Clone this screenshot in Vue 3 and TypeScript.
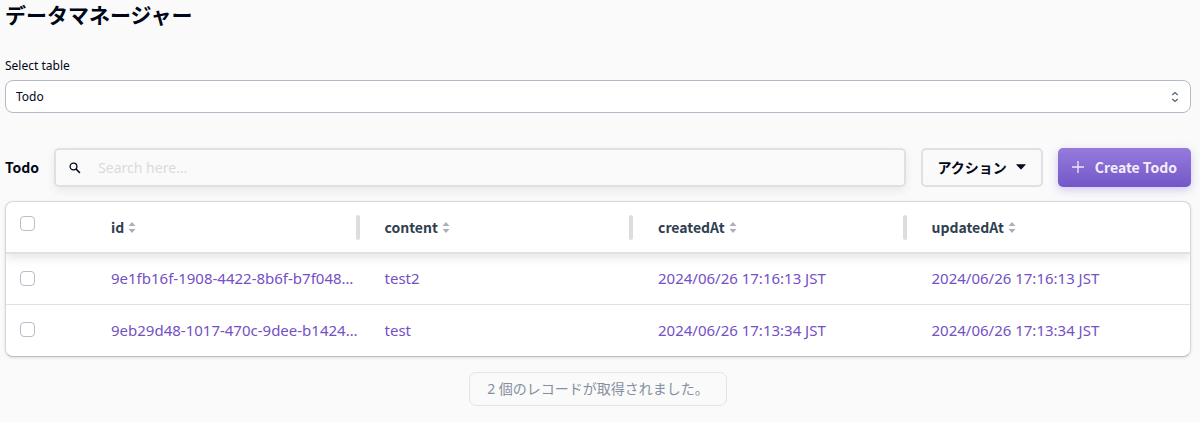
<script setup lang="ts">
import { ref } from 'vue'

interface Todo {
  id: string
  content: string
  createdAt: string
  updatedAt: string
}

const columns: (keyof Todo)[] = ['id', 'content', 'createdAt', 'updatedAt']

const rows: Todo[] = [
  {
    id: '9e1fb16f-1908-4422-8b6f-b7f048…',
    content: 'test2',
    createdAt: '2024/06/26 17:16:13 JST',
    updatedAt: '2024/06/26 17:16:13 JST',
  },
  {
    id: '9eb29d48-1017-470c-9dee-b1424…',
    content: 'test',
    createdAt: '2024/06/26 17:13:34 JST',
    updatedAt: '2024/06/26 17:13:34 JST',
  },
]

const table = ref('Todo')
const search = ref('')
const selected = ref<string[]>([])

function toggleAll(event: Event) {
  const checked = (event.target as HTMLInputElement).checked
  selected.value = checked ? rows.map((row) => row.id) : []
}
</script>

<template>
  <main class="manager">
    <h1 class="title">データマネージャー</h1>

    <label class="select-label" for="table-select">Select table</label>
    <div class="select-box">
      <select id="table-select" v-model="table" class="select">
        <option>Todo</option>
      </select>
      <svg class="select-icon" width="8" height="12" viewBox="0 0 8 12" aria-hidden="true">
        <path d="M1.3 4 4 1.6 6.7 4M1.3 8 4 10.4 6.7 8" fill="none" stroke="#566170" stroke-width="1.3" />
      </svg>
    </div>

    <div class="toolbar">
      <h2 class="name">Todo</h2>
      <label class="search">
        <svg width="12" height="12" viewBox="0 0 12 12" aria-hidden="true">
          <circle cx="4.5" cy="4.5" r="3.4" fill="none" stroke="#000716" stroke-width="1.3" />
          <path d="M7 7l3.9 3.9" stroke="#000716" stroke-width="1.6" />
        </svg>
        <input v-model="search" type="text" placeholder="Search here..." aria-label="Search" />
      </label>
      <button class="button action" type="button">
        アクション
        <svg width="10" height="6" viewBox="0 0 10 6" aria-hidden="true">
          <path d="M.6.3h8.8q.6 0 .2.5L5.6 5.1q-.6.6-1.2 0L.4.8Q0 .3.6.3z" fill="#000716" />
        </svg>
      </button>
      <button class="button create" type="button">
        <svg width="12" height="12" viewBox="0 0 12 12" aria-hidden="true">
          <path d="M6 0v12M0 6h12" stroke="#eee8fc" stroke-width="1.3" />
        </svg>
        Create Todo
      </button>
    </div>

    <div class="panel">
      <table class="table">
        <thead>
          <tr>
            <th class="check" scope="col">
              <input
                type="checkbox"
                aria-label="Select all"
                :checked="selected.length === rows.length"
                @change="toggleAll"
              />
            </th>
            <th v-for="column in columns" :key="column" scope="col">
              <div class="heading">
                <span>{{ column }}</span>
                <svg width="8" height="11" viewBox="0 0 8 11" aria-hidden="true">
                  <path d="M.5 4 4 0 7.5 4zM.5 7 4 11 7.5 7z" fill="#a9b0b9" />
                </svg>
              </div>
            </th>
          </tr>
        </thead>
        <tbody>
          <tr v-for="row in rows" :key="row.id">
            <td class="check">
              <input v-model="selected" type="checkbox" :value="row.id" :aria-label="row.content" />
            </td>
            <td v-for="column in columns" :key="column">{{ row[column] }}</td>
          </tr>
        </tbody>
      </table>
    </div>

    <p class="count">2 個のレコードが取得されました。</p>
  </main>
</template>

<style>
body {
  margin: 0;
  background: #fafafa;
}
</style>

<style scoped>
* {
  box-sizing: border-box;
}

.manager {
  display: flex;
  flex-direction: column;
  padding: 0 9px 16px 5px;
  color: #000716;
  font-family: "Noto Sans", "Noto Sans CJK JP", sans-serif;
  font-size: 15px;
}

input,
select,
button {
  font-family: inherit;
  color: inherit;
}

.title {
  margin: 0;
  font-size: 21px;
  line-height: 30px;
  font-weight: 700;
}

.select-label {
  margin-top: 26px;
  font-size: 12px;
  line-height: 20px;
}

.select-box {
  display: grid;
  align-items: center;
  margin-top: 4px;
}

.select {
  grid-area: 1 / 1;
  width: 100%;
  height: 33px;
  padding: 0 10px;
  appearance: none;
  border: 1px solid #b3bbc8;
  border-radius: 8px;
  background: #fff;
  font-size: 12px;
}

.select-icon {
  grid-area: 1 / 1;
  justify-self: end;
  margin-right: 12px;
  pointer-events: none;
}

.toolbar {
  display: flex;
  align-items: center;
  gap: 15px;
  margin-top: 35px;
}

.name {
  margin: 0;
  padding-bottom: 2px;
  font-family: "Noto Sans CJK JP", sans-serif;
  font-size: 14px;
  font-weight: 700;
}

.search {
  flex: 1;
  display: flex;
  align-items: center;
  gap: 17px;
  height: 39px;
  padding: 0 13px;
  border: 2px solid #dfe0e2;
  border-radius: 5px;
  box-shadow: 0 4px 10px rgba(0, 0, 0, 0.07);
}

.search input {
  flex: 1;
  min-width: 0;
  padding: 0;
  border: 0;
  outline: 0;
  background: transparent;
  font-size: 14px;
}

.search input::placeholder {
  color: #d9dadc;
  opacity: 1;
}

.button {
  display: flex;
  align-items: center;
  height: 39px;
  padding: 0 14px 2px;
  border-radius: 5px;
  font-family: "Noto Sans CJK JP", sans-serif;
  font-size: 14px;
  font-weight: 700;
  white-space: nowrap;
}

.action {
  gap: 9px;
  padding: 0 15px 2px;
  border: 2px solid #dfe0e2;
  background: #fafafa;
}

.create {
  gap: 11px;
  border: 0;
  background: linear-gradient(#967bdc, #7357c8);
  box-shadow: 0 3px 10px rgba(117, 87, 220, 0.3);
  color: #f3eefc;
}

.panel {
  margin-top: 14px;
  overflow: hidden;
  border: 1px solid #d5d8dc;
  border-bottom-color: #b9bfc9;
  border-radius: 8px;
  background: #fff;
  box-shadow: 0 1px 3px rgba(0, 0, 0, 0.12);
}

.table {
  width: 100%;
  table-layout: fixed;
  border-collapse: separate;
  border-spacing: 0;
}

.table th,
.table td {
  height: 51px;
  padding: 0 10px 2px 15px;
  text-align: left;
  white-space: nowrap;
}

.table .check {
  width: 90px;
  padding-left: 14px;
}

.table thead {
  position: relative;
  box-shadow: 0 4px 9px rgba(0, 0, 0, 0.1);
}

.table th {
  height: 52px;
  padding-bottom: 0;
  border-bottom: 2px solid #dfe1e3;
  color: #304050;
  font-family: "Noto Sans CJK JP", sans-serif;
  font-size: 14px;
  font-weight: 700;
}

.table th.check {
  padding-bottom: 8px;
}

.table td {
  color: #7450c5;
}

.table tbody tr:not(:last-child) td {
  border-bottom: 1px solid #dfe1e3;
}

.heading {
  display: flex;
  align-items: center;
  gap: 4px;
}

.heading::after {
  content: "";
  width: 4px;
  height: 25px;
  margin-left: auto;
  border-radius: 2px;
  background: #dcdddf;
}

th:last-child .heading::after {
  visibility: hidden;
}

input[type="checkbox"] {
  display: block;
  width: 15px;
  height: 15px;
  margin: 0;
  appearance: none;
  border: 1px solid #b6becb;
  border-radius: 4px;
  background: #fff;
}

input[type="checkbox"]:checked {
  background: #7357c8;
}

.count {
  align-self: center;
  margin: 15px 0 0;
  padding: 0 17px;
  border: 1px solid #e2e4e7;
  border-radius: 7px;
  color: #8490a0;
  font-size: 14px;
  line-height: 32px;
}
</style>
